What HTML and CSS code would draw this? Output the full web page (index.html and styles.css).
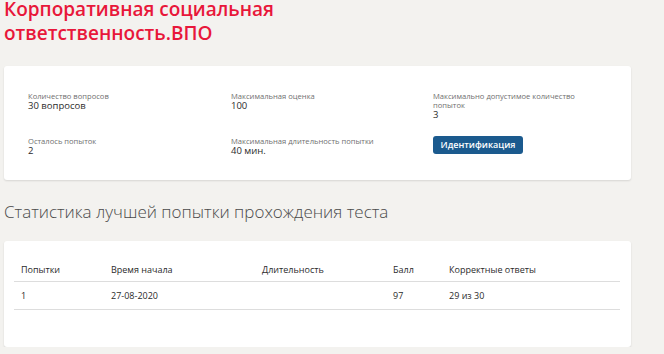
FILE: index.html
```html
<!DOCTYPE html>
<html lang="ru">
<head>
<meta charset="utf-8">
<title>Корпоративная социальная ответственность.ВПО</title>
<link rel="stylesheet" href="styles.css">
</head>
<body>
<main class="page">
  <h1 class="title">Корпоративная социальная<br>ответственность.ВПО</h1>

  <section class="card info">
    <div class="info-grid">
      <div class="item">
        <div class="label">Количество вопросов</div>
        <div class="value">30 вопросов</div>
      </div>
      <div class="item">
        <div class="label">Максимальная оценка</div>
        <div class="value">100</div>
      </div>
      <div class="item">
        <div class="label">Максимально допустимое количество попыток</div>
        <div class="value">3</div>
      </div>
      <div class="item item-low">
        <div class="label">Осталось попыток</div>
        <div class="value">2</div>
      </div>
      <div class="item item-low">
        <div class="label">Максимальная длительность попытки</div>
        <div class="value">40 мин.</div>
      </div>
      <div class="item">
        <button class="btn" type="button">Идентификация</button>
      </div>
    </div>
  </section>

  <h2 class="subtitle">Статистика лучшей попытки прохождения теста</h2>

  <section class="card stats">
    <table class="table">
      <colgroup>
        <col class="c1"><col class="c2"><col class="c3"><col class="c4"><col class="c5">
      </colgroup>
      <thead>
        <tr><th>Попытки</th><th>Время начала</th><th>Длительность</th><th>Балл</th><th>Корректные ответы</th></tr>
      </thead>
      <tbody>
        <tr><td>1</td><td>27-08-2020</td><td></td><td>97</td><td>29 из 30</td></tr>
      </tbody>
    </table>
  </section>
</main>
</body>
</html>
```
FILE: styles.css
```css
html, body {
  margin: 0;
  padding: 0;
}
body {
  background: #f3f2ef;
  font-family: "Open Sans", "Liberation Sans", sans-serif;
  color: #333;
}
.page {
  padding: 0 33px 0 4px;
  width: 627px;
}
.title {
  margin: -3px 0 0;
  font-size: 19px;
  line-height: 24px;
  font-weight: 600;
  color: #e8173a;
}
.card {
  background: #fff;
  border-radius: 3px;
  box-shadow: 0 1px 2px rgba(0, 0, 0, 0.12);
}
.info {
  margin-top: 21px;
  padding: 26px 24px 26px 24px;
  height: 62px;
}
.info-grid {
  display: grid;
  grid-template-columns: 203px 202px 150px;
  row-gap: 16px;
  align-items: start;
}
.item-low {
  padding-top: 1px;
}
.label {
  font-size: 7.6px;
  line-height: 9px;
  color: #6f6f6f;
}
.value {
  font-size: 9.5px;
  line-height: 10px;
  font-weight: 500;
  color: #2b2b2b;
}
.btn {
  display: block;
  width: 90px;
  height: 18px;
  padding: 0;
  border: 0;
  border-radius: 3px;
  background: #1b5a8e;
  color: #fff;
  font-family: "Open Sans", "Liberation Sans", sans-serif;
  font-size: 9px;
  font-weight: 600;
  line-height: 18px;
  text-align: center;
}
.subtitle {
  margin: 20px 0 17px;
  font-size: 17px;
  line-height: 24px;
  font-weight: 300;
  color: #4a4a4a;
}
.stats {
  padding: 15px 11px 37px 10px;
}
.table {
  width: 100%;
  border-collapse: collapse;
  table-layout: fixed;
  font-size: 9px;
  line-height: 12px;
  color: #2b2b2b;
}
.c1 { width: 90px; }
.c2 { width: 151px; }
.c3 { width: 131px; }
.c4 { width: 56px; }
.table th {
  text-align: left;
  font-weight: 400;
  padding: 8px 7px 5px;
  border-bottom: 1px solid #ddd;
}
.table td {
  padding: 8px 7px 7px;
  border-bottom: 1px solid #ddd;
}
```
